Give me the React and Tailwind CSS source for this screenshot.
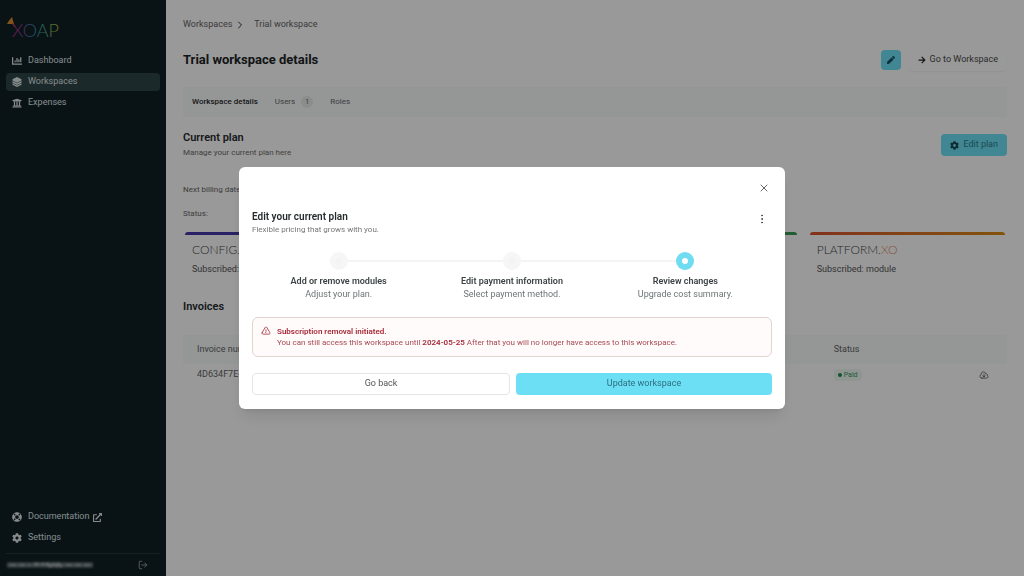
import { useState } from 'react';
import clsx from 'clsx';
import { FaChartBar, FaArrowRight, FaCog, FaPen, FaLifeRing, FaUniversity, FaExternalLinkAlt } from 'react-icons/fa';
import { HiOutlineExclamationTriangle, HiOutlineCloudArrowDown } from 'react-icons/hi2';
import { ChevronRight, EllipsisVertical, LogOut, X } from 'lucide-react';

function StackIcon({ className }) {
  return (
    <svg viewBox="0 0 20 20" className={className} fill="currentColor" aria-hidden="true">
      <path d="M10 0l9 4.6v2.4L10 11.400 1 7V4.600z" />
      <path d="M1 8l9 4.400L19 8v3.800l-9 4.400-9-4.400z" />
      <path d="M1 12.800l9 4.400 9-4.400v2.600L10 20l-9-4.600z" />
    </svg>
  );
}

const mainNav = [
  { label: 'Dashboard', icon: FaChartBar },
  { label: 'Workspaces', icon: StackIcon, active: true },
  { label: 'Expenses', icon: FaUniversity },
];

const footerNav = [
  { label: 'Documentation', icon: FaLifeRing, external: true },
  { label: 'Settings', icon: FaCog },
];

const modules = [
  { name: 'CONFIG', bar: 'bg-[#4338a8]', accent: 'text-[#7c6fd0]' },
  { name: 'IMAGE', bar: 'bg-[#2c7fb8]', accent: 'text-[#5fa8d8]' },
  { name: 'APPLICATION', bar: 'bg-[#3c9a54]', accent: 'text-[#6cc084]' },
  { name: 'PLATFORM', bar: 'bg-linear-to-r from-[#d9542f] to-[#d98a10]', accent: 'text-[#e08a66]' },
];

const steps = [
  { title: 'Add or remove modules', text: 'Adjust your plan.' },
  { title: 'Edit payment information', text: 'Select payment method.' },
  { title: 'Review changes', text: 'Upgrade cost summary.' },
];

function NavLink({ item }) {
  const Icon = item.icon;
  return (
    <a
      href="#"
      className={clsx(
        'flex h-[18px] items-center gap-1.5 rounded-sm px-1.5 text-[9px] text-[#dfe6e8]',
        item.active && 'bg-[#304547]'
      )}
    >
      <Icon className="size-2.5" />
      {item.label}
      {item.external && <FaExternalLinkAlt className="-ml-0.5 size-[9px]" />}
    </a>
  );
}

function Sidebar() {
  return (
    <aside className="flex w-[166px] shrink-0 flex-col bg-[#101f24] px-1.5 pt-4">
      <a href="#" aria-label="XOAP" className="flex h-[26px] w-14">
        <svg viewBox="0 0 56 26" className="h-[26px] w-14">
          <defs>
            <linearGradient id="logo" x1="0" x2="1" y1="0" y2="0">
              <stop offset="0" stopColor="#d02a86" />
              <stop offset="0.2" stopColor="#8a3fa0" />
              <stop offset="0.45" stopColor="#3c86a8" />
              <stop offset="0.7" stopColor="#3fae8c" />
              <stop offset="1" stopColor="#b9c43a" />
            </linearGradient>
          </defs>
          <path d="M6 1l2 7H1c1-2 3-5 5-7z" fill="#d98a2c" />
          <path d="M6 7l3 4" stroke="#d9542f" />
          <text x="6" y="21" fill="url(#logo)" fontFamily="Lato, sans-serif" fontSize="18" fontWeight="300">
            XOAP
          </text>
        </svg>
      </a>
      <nav className="mt-2.5 flex flex-col gap-[3px]">
        {mainNav.map((item) => (
          <NavLink key={item.label} item={item} />
        ))}
      </nav>
      <nav className="mt-auto flex flex-col gap-[3px]">
        {footerNav.map((item) => (
          <NavLink key={item.label} item={item} />
        ))}
      </nav>
      <div className="mt-1.5 flex h-[23px] items-center justify-between border-t border-[#24383c] pr-3">
        <svg viewBox="0 0 88 10" className="h-2.5 w-[88px] blur-[1px]">
          <path d="M1 5h86" stroke="#69777a" strokeWidth="5" />
          <path d="M28 4h26M42 6h14" stroke="#a3adaf" strokeWidth="3" strokeDasharray="5 2 3 1" />
          <path d="M4 5h20M60 5h24" stroke="#8d999c" strokeWidth="3" strokeDasharray="6 3" />
        </svg>
        <button type="button" aria-label="Log out" className="text-[#a3adaf]">
          <LogOut className="size-2.5" strokeWidth={2} />
        </button>
      </div>
    </aside>
  );
}

function ModuleCard({ module }) {
  return (
    <div className="flex-1 px-0.5">
      <div className={clsx('h-[3px] rounded-t-sm', module.bar)} />
      <div className="px-[7px] pt-2">
        <div className="font-[Lato,sans-serif] text-[12px] leading-[14px] font-light text-[#444]">
          {module.name}.<span className={module.accent}>XO</span>
        </div>
        <p className="mt-1.5 text-[9px] leading-3 text-[#555]">Subscribed: module</p>
      </div>
    </div>
  );
}

function WorkspacePage() {
  return (
    <main className="min-w-0 flex-1 px-[17px] pt-[19px]">
      <nav aria-label="Breadcrumb" className="flex h-3 items-center text-[9px] text-[#636363]">
        <a href="#">Workspaces</a>
        <ChevronRight className="mr-2 ml-0.5 size-3 text-[#333]" />
        <a href="#">Trial workspace</a>
      </nav>

      <div className="mt-[18px] flex h-[22px] items-center justify-between">
        <h1 className="text-[13px] font-bold text-[#1c2326]">Trial workspace details</h1>
        <div className="flex items-center gap-2">
          <button
            type="button"
            aria-label="Edit workspace"
            className="flex size-5 items-center justify-center rounded-sm bg-[#6cdff5] text-[#15505f]"
          >
            <FaPen className="size-2" />
          </button>
          <button
            type="button"
            className="flex h-[22px] items-center gap-1 rounded-sm px-[9px] text-[9px] text-[#4a4a4a] shadow-xs"
          >
            <FaArrowRight className="size-2 text-[#222]" />
            Go to Workspace
          </button>
        </div>
      </div>

      <div className="mt-4 flex h-[30px] items-center gap-[17px] bg-[#f8fcfb] px-[9px] text-[8px] text-[#666]">
        <a href="#" className="font-medium text-[#2b2b2b]">Workspace details</a>
        <a href="#" className="flex items-center gap-1.5">
          Users
          <span className="flex size-3 items-center justify-center rounded-full bg-[#e8ebeb] text-[7px]">1</span>
        </a>
        <a href="#">Roles</a>
      </div>

      <div className="mt-[14px] flex items-center justify-between">
        <div>
          <h2 className="text-[11px] leading-[14px] font-semibold text-[#262c2e]">Current plan</h2>
          <p className="mt-0.5 text-[8px] leading-3 text-[#6b6b6b]">Manage your current plan here</p>
        </div>
        <button
          type="button"
          className="flex h-[22px] items-center gap-1 rounded-sm bg-[#6cdff5] px-[9px] text-[9px] text-[#2e7c8c]"
        >
          <FaCog className="size-[9px] text-[#164a57]" />
          Edit plan
        </button>
      </div>

      <p className="mt-[25px] text-[8px] leading-3 text-[#666]">Next billing date:</p>
      <p className="mt-3 text-[8px] leading-3 text-[#666]">Status:</p>

      <div className="mt-3 flex gap-[9px]">
        {modules.map((module) => (
          <ModuleCard key={module.name} module={module} />
        ))}
      </div>

      <h2 className="mt-[25px] text-[11px] leading-[14px] font-semibold text-[#262c2e]">Invoices</h2>
      <table className="mt-[21px] w-full table-fixed text-left text-[9px] text-[#636363]">
        <thead>
          <tr className="h-[29px] bg-[#f8fcfb]">
            <th className="w-[78%] pl-[14px] font-normal">Invoice number</th>
            <th className="w-[14%] pl-2 font-normal">Status</th>
            <th aria-label="Download" />
          </tr>
        </thead>
        <tbody>
          <tr className="h-[22px]">
            <td className="pl-[14px]">4D634F7E-0001</td>
            <td className="pl-2">
              <span className="inline-flex h-3 items-center gap-0.5 rounded-sm bg-[#effaf4] px-1 text-[7px] text-[#2f9463]">
                <span className="size-1 rounded-full bg-[#1c8a52]" />
                Paid
              </span>
            </td>
            <td className="pr-[18px] text-right">
              <button type="button" aria-label="Download invoice" className="align-middle text-[#333]">
                <HiOutlineCloudArrowDown className="size-2.5" />
              </button>
            </td>
          </tr>
        </tbody>
      </table>
    </main>
  );
}

function Stepper({ current }) {
  return (
    <ol className="mt-4 flex text-center">
      {steps.map((step, i) => (
        <li key={step.title} className="flex-1">
          <div className="flex items-center">
            <div className={clsx('h-0.5 flex-1', i > 0 && 'bg-[#f4f4f4]')} />
            <span
              className={clsx(
                'flex size-[18px] items-center justify-center rounded-full',
                i === current ? 'bg-[#6fdcf2]' : 'bg-[#f6f6f6]'
              )}
            >
              <span className={clsx('size-1.5 rounded-full', i === current ? 'bg-white' : 'bg-[#f3f3f3]')} />
            </span>
            <div className={clsx('h-0.5 flex-1', i < steps.length - 1 && 'bg-[#f4f4f4]')} />
          </div>
          <h3 className="mt-1 text-[9px] leading-[14px] font-semibold text-[#3d4446]">{step.title}</h3>
          <p className="text-[9px] leading-3 text-[#6f7577]">{step.text}</p>
        </li>
      ))}
    </ol>
  );
}

function EditPlanDialog({ onClose }) {
  return (
    <div className="fixed inset-0 flex items-center justify-center bg-black/40">
      <div
        role="dialog"
        aria-modal="true"
        aria-labelledby="dialog-title"
        className="w-full max-w-[546px] rounded-md bg-white px-[13px] pt-[15px] pb-[14px] shadow-lg"
      >
        <div className="flex justify-end pr-0.5">
          <button type="button" aria-label="Close" onClick={onClose} className="text-[#666]">
            <X className="size-3" strokeWidth={2} />
          </button>
        </div>
        <div className="mt-4 flex items-start justify-between">
          <div>
            <h2 id="dialog-title" className="text-[10px] leading-[14px] font-semibold text-[#262c2e]">
              Edit your current plan
            </h2>
            <p className="text-[8px] leading-3 text-[#777]">Flexible pricing that grows with you.</p>
          </div>
          <button type="button" aria-label="More options" className="mt-[3px] pr-1 text-[#444]">
            <EllipsisVertical className="size-3" />
          </button>
        </div>

        <Stepper current={2} />

        <div
          role="alert"
          className="mt-[17px] flex gap-1.5 rounded-md border border-[#e3d3d1] bg-[#fefbfa] p-2 text-[8px] leading-[11px] text-[#a84a55]"
        >
          <HiOutlineExclamationTriangle className="size-2.5 shrink-0 text-[#a8323e]" strokeWidth={2} />
          <div>
            <p className="font-semibold text-[#a82a3a]">Subscription removal initiated.</p>
            <p>
              You can still access this workspace until <b className="font-semibold text-[#a82a3a]">2024-05-25</b> After
              that you will no longer have access to this workspace.
            </p>
          </div>
        </div>

        <div className="mt-4 flex gap-1.5">
          <button
            type="button"
            onClick={onClose}
            className="h-[22px] flex-1 rounded-sm border border-[#e6e6e6] text-[9px] text-[#555]"
          >
            Go back
          </button>
          <button type="button" className="h-[22px] flex-1 rounded-sm bg-[#6cdff5] text-[9px] text-[#2d6f80]">
            Update workspace
          </button>
        </div>
      </div>
    </div>
  );
}

export default function App() {
  const [open, setOpen] = useState(true);

  return (
    <div className="flex min-h-screen bg-white font-[Roboto,sans-serif]">
      <Sidebar />
      <WorkspacePage />
      {open && <EditPlanDialog onClose={() => setOpen(false)} />}
    </div>
  );
}
